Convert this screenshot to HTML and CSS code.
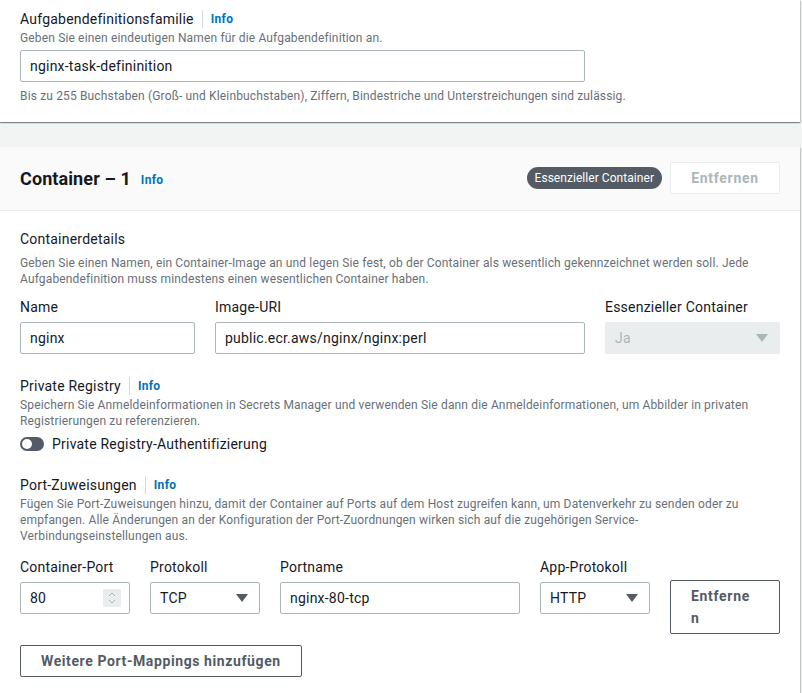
FILE: index.html
```html
<!DOCTYPE html>
<html lang="de">
<head>
<meta charset="utf-8">
<title>Aufgabendefinition</title>
<link rel="stylesheet" href="styles.css">
</head>
<body>
<section class="card card-top">
  <div class="label-row"><span class="label">Aufgabendefinitionsfamilie</span><span class="sep"></span><a class="info">Info</a></div>
  <p class="desc">Geben Sie einen eindeutigen Namen für die Aufgabendefinition an.</p>
  <div class="input wide">nginx-task-defininition</div>
  <p class="desc constraint">Bis zu 255 Buchstaben (Groß- und Kleinbuchstaben), Ziffern, Bindestriche und Unterstreichungen sind zulässig.</p>
</section>

<section class="card card-container">
  <header class="card-header">
    <h2 class="title">Container – 1</h2><a class="info info-title">Info</a>
    <span class="spacer"></span>
    <span class="badge">Essenzieller Container</span>
    <button class="btn btn-disabled">Entfernen</button>
  </header>
  <div class="card-body">
    <h3 class="label">Containerdetails</h3>
    <p class="desc desc-block">Geben Sie einen Namen, ein Container-Image an und legen Sie fest, ob der Container als wesentlich gekennzeichnet werden soll. Jede Aufgabendefinition muss mindestens einen wesentlichen Container haben.</p>
    <div class="fields">
      <div class="field w175"><span class="label">Name</span><div class="input">nginx</div></div>
      <div class="field w370"><span class="label">Image-URI</span><div class="input">public.ecr.aws/nginx/nginx:perl</div></div>
      <div class="field w175"><span class="label">Essenzieller Container</span><div class="input select disabled"><span>Ja</span><svg class="caret" width="12" height="8" viewBox="0 0 12 8"><path d="M0 0h12L6 8z"/></svg></div></div>
    </div>

    <div class="label-row mt21"><span class="label">Private Registry</span><span class="sep"></span><a class="info">Info</a></div>
    <p class="desc">Speichern Sie Anmeldeinformationen in Secrets Manager und verwenden Sie dann die Anmeldeinformationen, um Abbilder in privaten Registrierungen zu referenzieren.</p>
    <div class="toggle-row"><span class="toggle"><span class="knob"></span></span><span class="toggle-label">Private Registry-Authentifizierung</span></div>

    <div class="label-row mt19"><span class="label">Port-Zuweisungen</span><span class="sep"></span><a class="info">Info</a></div>
    <p class="desc">Fügen Sie Port-Zuweisungen hinzu, damit der Container auf Ports auf dem Host zugreifen kann, um Datenverkehr zu senden oder zu empfangen. Alle Änderungen an der Konfiguration der Port-Zuordnungen wirken sich auf die zugehörigen Service-Verbindungseinstellungen aus.</p>
    <div class="fields ports">
      <div class="field w110"><span class="label">Container-Port</span><div class="input number"><span>80</span><svg class="spin" width="18" height="18" viewBox="0 0 18 18"><rect width="18" height="18" fill="#eaeded"/><path d="M6 7l3-3 3 3M6 11l3 3 3-3" fill="none" stroke="#aab7b8" stroke-width="1"/></svg></div></div>
      <div class="field w110"><span class="label">Protokoll</span><div class="input select"><span>TCP</span><svg class="caret" width="12" height="8" viewBox="0 0 12 8"><path d="M0 0h12L6 8z"/></svg></div></div>
      <div class="field w240"><span class="label">Portname</span><div class="input">nginx-80-tcp</div></div>
      <div class="field w110"><span class="label">App-Protokoll</span><div class="input select"><span>HTTP</span><svg class="caret" width="12" height="8" viewBox="0 0 12 8"><path d="M0 0h12L6 8z"/></svg></div></div>
      <button class="btn btn-remove">Entfernen</button>
    </div>
    <button class="btn btn-add">Weitere Port-Mappings hinzufügen</button>
  </div>
</section>
</body>
</html>
```

FILE: styles.css
```css
* { box-sizing: border-box; }
html, body { margin: 0; padding: 0; }
body {
  background: #f2f3f3;
  font-family: Roboto, "Liberation Sans", sans-serif;
  color: #16191f;
  font-size: 14px;
  line-height: 22px;
  letter-spacing: 0.22px;
  height: 693px;
  overflow: hidden;
}
p { margin: 0; }
h2, h3 { margin: 0; }

.card {
  background: #fff;
  width: 800px;
  box-shadow: 0 1px 1px 0 rgba(0,28,36,.3), 1px 1px 1px 0 rgba(0,28,36,.15), -1px 1px 1px 0 rgba(0,28,36,.15);
}
.card-top { padding: 8px 20px 18px; }
.card-container { margin-top: 25px; height: 560px; }

.label-row { display: flex; align-items: center; height: 22px; }
.label { font-size: 14px; line-height: 22px; color: #16191f; font-weight: 400; display: block; }
.sep { width: 1px; height: 18px; background: #d5dbdb; margin: 0 8px; }
.info { color: #0073bb; font-weight: 700; font-size: 12px; line-height: 22px; letter-spacing: 0.3px; }

.desc { font-size: 12px; line-height: 16px; color: #687078; letter-spacing: 0.15px; max-width: 745px; }
.constraint { margin-top: 6px; }

.input {
  height: 32px;
  border: 1px solid #aab7b8;
  border-radius: 2px;
  padding: 0 9px;
  display: flex;
  align-items: center;
  font-size: 14px;
  color: #16191f;
  background: #fff;
}
.wide { width: 565px; margin-top: 4px; }

.card-header {
  height: 64px;
  background: #fafafa;
  border-bottom: 1px solid #eaeded;
  display: flex;
  align-items: center;
  padding: 0 20px;
}
.title { font-size: 18px; font-weight: 700; line-height: 24px; letter-spacing: 0.1px; }
.info-title { margin-left: 10px; margin-top: 3px; }
.spacer { flex: 1; }
.badge {
  background: #545b64;
  color: #fff;
  font-size: 12px;
  line-height: 22px;
  height: 22px;
  padding: 0 8px;
  border-radius: 11px;
  margin-right: 8px;
  margin-top: -1px;
  letter-spacing: 0.05px;
}
.btn {
  font-family: inherit;
  font-size: 14px;
  font-weight: 700;
  line-height: 22px;
  letter-spacing: 0.7px;
  background: #fff;
  border-radius: 2px;
  padding: 4px 20px;
  cursor: pointer;
}
.btn-disabled {
  width: 110px;
  height: 32px;
  border: 1px solid #eaeded;
  color: #aab7b8;
  margin-top: -2px;
}

.card-body { padding: 17px 20px; }
.desc-block { margin-top: 5px; }
.fields { display: flex; gap: 20px; margin-top: 9px; }
.field { display: flex; flex-direction: column; gap: 4px; }
.w175 { width: 175px; }
.w370 { width: 370px; }
.w110 { width: 110px; }
.w240 { width: 240px; }

.select { justify-content: space-between; }
.caret { fill: #545b64; margin-right: 2px; }
.disabled { background: #eaeded; border-color: #eaeded; color: #aab7b8; }
.disabled .caret { fill: #aab7b8; }
.number { justify-content: space-between; padding-right: 8px; }
.spin { display: block; }

.mt21 { margin-top: 21px; }
.mt19 { margin-top: 19px; }
.toggle-row { display: flex; align-items: center; margin-top: 4px; height: 22px; }
.toggle {
  width: 24px; height: 14px; border-radius: 7px; background: #545b64;
  position: relative; margin-right: 8px;
}
.knob {
  position: absolute; left: 2px; top: 2px; width: 10px; height: 10px;
  border-radius: 50%; background: #fff;
}
.toggle-label { font-size: 14px; }

.ports { margin-top: 12px; }
.btn-remove {
  width: 110px;
  border: 1px solid #545b64;
  color: #545b64;
  text-align: left;
  overflow-wrap: anywhere;
  word-break: break-all;
  align-self: flex-start;
  margin-top: 24px;
  padding: 4px 26px 4px 20px;
}
.btn-add {
  margin-top: 11px;
  border: 1px solid #545b64;
  color: #545b64;
  height: 32px;
  letter-spacing: 0.6px;
}
```
